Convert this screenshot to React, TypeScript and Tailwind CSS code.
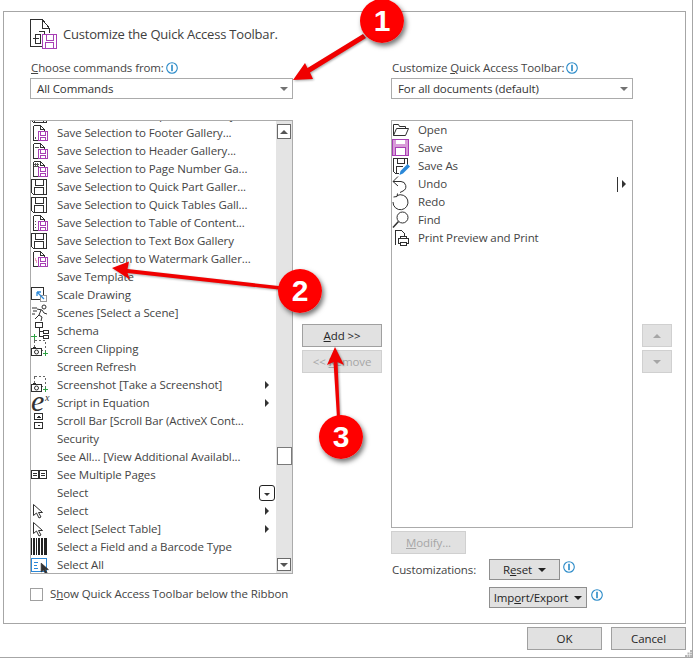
import React from "react";

const k = "#2f2f2f";
const p = "#a83fb5";

function Ic({ children, w = 18, h = 18 }: { children: React.ReactNode; w?: number; h?: number }) {
  return (
    <svg width={w} height={h} viewBox={`0 0 ${w} ${h}`} fill="none" shapeRendering="crispEdges" className="shrink-0 block">
      {children}
    </svg>
  );
}

function MiniSave({ x = 7, y = 7 }: { x?: number; y?: number }) {
  return (
    <g transform={`translate(${x} ${y})`}>
      <rect x="0.5" y="0.5" width="9" height="9" fill="#fff" stroke={p} />
      <path d="M2.5 1v3h5V1M2.5 9.5V6.5h5v3" stroke={p} />
    </g>
  );
}

function DocSave({ mark }: { mark?: React.ReactNode }) {
  return (
    <Ic>
      <path d="M2.5 1.5h7l4 4v2M2.5 1.5v15h5M9.5 1.5v4h4" stroke={k} />
      {mark}
      <MiniSave x={7} y={7} />
    </Ic>
  );
}

function BigSave() {
  return (
    <Ic>
      <path d="M0.5 1.5h15v15h-13l-2-2z" stroke={k} />
      <path d="M4.5 2v5.5h8V2M3.5 16v-6.5h9V16" stroke={k} />
    </Ic>
  );
}

function Cursor({ x = 0, y = 0, fill = "#fff", s = 1 }: { x?: number; y?: number; fill?: string; s?: number }) {
  return (
    <g transform={`translate(${x} ${y}) scale(${s})`}>
      <path d="M1.5 1.5v11l3-2.5 2.5 5 2-1-2.5-4.5h4z" fill={fill} stroke={k} shapeRendering="auto" />
    </g>
  );
}

function ShotIcon() {
  return (
    <Ic>
      <rect x="3.5" y="0.5" width="11" height="10" stroke="#666" strokeDasharray="2 2" />
      <rect x="0.5" y="8.5" width="10" height="7" fill="#fff" stroke={k} />
      <rect x="2" y="7" width="3" height="2" fill={k} />
      <circle cx="5.5" cy="12" r="2" stroke={k} shapeRendering="auto" />
      <path d="M12 13.5h5M14.5 11v5" stroke="#2ea043" />
    </Ic>
  );
}

function NoIcon() {
  return <span className="block w-[18px] h-[18px] shrink-0" />;
}

const SubArrow = () => <span className="ml-auto mr-[7px] w-0 h-0 border-y-[4px] border-y-transparent border-l-[4px] border-l-[#333]" />;

const DropBox = () => (
  <span className="ml-auto mr-[1px] flex items-end justify-center pb-[4px] w-[16px] h-[16px] rounded-[3px] border border-[#222] bg-white">
    <span className="w-0 h-0 border-x-[3px] border-x-transparent border-t-[3px] border-t-[#333]" />
  </span>
);

type Row = { t: string; i: React.ReactNode; r?: React.ReactNode };

const leftRows: Row[] = [
  { t: "Save Selection to Equation Gallery...", i: <BigSave /> },
  { t: "Save Selection to Footer Gallery...", i: <DocSave mark={<path d="M4 12.5h1v2H4z" fill="#555" />} /> },
  { t: "Save Selection to Header Gallery...", i: <DocSave mark={<path d="M4 5h4" stroke="#555" />} /> },
  { t: "Save Selection to Page Number Ga...", i: <DocSave mark={<path d="M4 3v4M6 3v4M3 4h5M3 6h5" stroke="#555" />} /> },
  { t: "Save Selection to Quick Part Galler...", i: <BigSave /> },
  { t: "Save Selection to Quick Tables Gall...", i: <BigSave /> },
  { t: "Save Selection to Table of Content...", i: <DocSave mark={<path d="M4 7h2M4 10h2M4 13h2" stroke="#555" strokeDasharray="1 1" />} /> },
  { t: "Save Selection to Text Box Gallery", i: <BigSave /> },
  { t: "Save Selection to Watermark Galler...", i: <DocSave mark={<path d="M4 8l2 5" stroke="#f0a0b8" />} /> },
  { t: "Save Template", i: <NoIcon /> },
  {
    t: "Scale Drawing",
    i: (
      <Ic>
        <rect x="0.5" y="1.5" width="12" height="12" stroke={k} />
        <rect x="9.5" y="9.5" width="6" height="6" fill="#fff" stroke="#999" />
        <path d="M6 6l7 7M6 6h4M6 6v4" stroke="#2b88d8" shapeRendering="auto" strokeWidth="1.3" />
      </Ic>
    ),
  },
  {
    t: "Scenes [Select a Scene]",
    i: (
      <Ic>
        <circle cx="13" cy="3" r="2" stroke={k} shapeRendering="auto" />
        <path d="M1 4h5M2 7h4M1 10h3M6 5l5 1 2 3 3 1M10 6l-2 5 3 2-1 4M8 11l-4 4" stroke={k} shapeRendering="auto" />
      </Ic>
    ),
  },
  {
    t: "Schema",
    i: (
      <Ic>
        <rect x="4.5" y="0.5" width="7" height="5" fill="#fff" stroke={k} />
        <path d="M8 6v9M8 9.5h4M8 14.5h4" stroke={k} />
        <rect x="12.5" y="8.5" width="5" height="3" fill="#fff" stroke={k} />
        <rect x="12.5" y="13.5" width="5" height="3" fill="#fff" stroke={k} />
        <path d="M0 14.5h6M3 11.5v6" stroke="#2ea043" />
      </Ic>
    ),
  },
  { t: "Screen Clipping", i: <ShotIcon /> },
  { t: "Screen Refresh", i: <NoIcon /> },
  { t: "Screenshot [Take a Screenshot]", i: <ShotIcon />, r: <SubArrow /> },
  {
    t: "Script in Equation",
    i: (
      <span className="relative block w-[18px] h-[18px] shrink-0 text-[#333] font-['Liberation_Serif',serif] italic leading-none tracking-normal">
        <span className="absolute left-0 top-[-8px] text-[30px] leading-[30px]">e</span>
        <span className="absolute left-[14px] top-[-1px] text-[10px] leading-[10px]">x</span>
      </span>
    ),
    r: <SubArrow />,
  },
  {
    t: "Scroll Bar [Scroll Bar (ActiveX Cont...",
    i: (
      <Ic>
        <rect x="3.5" y="1.5" width="8" height="6" stroke={k} />
        <path d="M5.5 5.5h4L7.5 3.5z" fill={k} />
        <rect x="3.5" y="10.5" width="8" height="6" stroke={k} />
        <path d="M5.5 12.5h4L7.5 14.5z" fill={k} />
      </Ic>
    ),
  },
  { t: "Security", i: <NoIcon /> },
  { t: "See All... [View Additional Availabl...", i: <NoIcon /> },
  {
    t: "See Multiple Pages",
    i: (
      <Ic>
        <rect x="0.5" y="4.5" width="7" height="8" stroke={k} />
        <rect x="8.5" y="4.5" width="7" height="8" stroke={k} />
        <path d="M2 7.5h4M2 9.5h4M10 7.5h4M10 9.5h4" stroke={k} />
      </Ic>
    ),
  },
  { t: "Select", i: <NoIcon />, r: <DropBox /> },
  { t: "Select", i: <Ic><Cursor x={1} y={1} /></Ic>, r: <SubArrow /> },
  { t: "Select [Select Table]", i: <Ic><Cursor x={1} y={1} /></Ic>, r: <SubArrow /> },
  {
    t: "Select a Field and a Barcode Type",
    i: (
      <Ic>
        <path d="M0.5 0v17M2.5 0v17M3.5 0v17M5.5 0v17M7.5 0v17M8.5 0v17M10 0v17M11.5 0v17M13 0v17M14.5 0v17M15.5 0v17" stroke="#222" />
      </Ic>
    ),
  },
  {
    t: "Select All",
    i: (
      <Ic>
        <rect x="0.5" y="2.5" width="15" height="13" stroke="#2b88d8" />
        <path d="M3 6h4M3 9h3M3 12h4" stroke="#2b88d8" />
        <Cursor x={9} y={6} fill="#333" s={0.8} />
      </Ic>
    ),
  },
];

const rightRows: Row[] = [
  {
    t: "Open",
    i: (
      <Ic>
        <path d="M1.5 14.5V3.5h5l1 2h6v2M1.5 14.5h12l3-7h-12z" stroke={k} shapeRendering="auto" />
      </Ic>
    ),
  },
  {
    t: "Save",
    i: (
      <Ic>
        <rect x="0.5" y="0.5" width="16" height="16" fill="#d89bd8" stroke={p} />
        <rect x="4" y="1" width="9" height="4" fill="#fff" />
        <rect x="3.5" y="8.5" width="10" height="8" fill="#fff" stroke={p} />
      </Ic>
    ),
  },
  {
    t: "Save As",
    i: (
      <Ic>
        <path d="M7 16.5H3.5l-2-2V1.5h14v6" stroke={k} />
        <path d="M5.5 2v4.5h7V2M4.5 16V9.5h6" stroke={k} />
        <path d="M7.5 18l1-4 7-7 2.5 2.5-7 7z" fill="#2b88d8" shapeRendering="auto" />
      </Ic>
    ),
  },
  {
    t: "Undo",
    i: (
      <Ic>
        <path d="M6 1.5L1 6.5L6 11M1 6.5H9a5 5 0 0 1 2 9.5L8 17.5" stroke={k} shapeRendering="auto" />
      </Ic>
    ),
    r: (
      <span className="ml-auto mr-[6px] flex items-center gap-[4px]">
        <span className="block w-px h-[15px] bg-[#333]" />
        <span className="w-0 h-0 border-y-[4px] border-y-transparent border-l-[4px] border-l-[#333]" />
      </span>
    ),
  },
  {
    t: "Redo",
    i: (
      <Ic>
        <path d="M5 2.6A7.5 7.5 0 1 1 1 9M5.5 0.5L5 3.5L1.5 4" stroke={k} shapeRendering="auto" />
      </Ic>
    ),
  },
  {
    t: "Find",
    i: (
      <Ic>
        <circle cx="10.5" cy="6.5" r="5.5" stroke={k} shapeRendering="auto" />
        <path d="M6.5 10.5L1 16.5" stroke={k} strokeWidth="1.5" shapeRendering="auto" />
      </Ic>
    ),
  },
  {
    t: "Print Preview and Print",
    i: (
      <Ic>
        <path d="M3.5 15.5v-14h6l3 3v4" stroke={k} />
        <rect x="6.5" y="9.5" width="10" height="5" fill="#fff" stroke={k} />
        <rect x="8.5" y="7.5" width="6" height="2" fill="#fff" stroke={k} />
        <rect x="8.5" y="13.5" width="6" height="3" fill="#fff" stroke={k} />
      </Ic>
    ),
  },
];

function Info() {
  return (
    <svg width="12" height="12" viewBox="0 0 12 12" className="block shrink-0">
      <circle cx="6" cy="6" r="5.3" fill="#fff" stroke="#2a8ac8" strokeWidth="1.1" />
      <rect x="5.2" y="2.8" width="1.6" height="6.4" fill="#2a8ac8" />
    </svg>
  );
}

function Rows({ rows, clipFirst }: { rows: Row[]; clipFirst?: boolean }) {
  return (
    <>
      {rows.map((r, i) => (
        <div key={i} className={`flex items-center h-[18px] shrink-0 whitespace-nowrap ${i === 0 && clipFirst ? "-mt-[15px]" : ""}`}>
          {r.i}
          <span className="ml-[8px]">{r.t}</span>
          {r.r}
        </div>
      ))}
    </>
  );
}

function Select({ text }: { text: string }) {
  return (
    <div className="w-full h-[21px] mt-[2px] border border-[#ababab] bg-white flex items-center justify-between pl-[6px] pr-[4px] text-[#333]">
      <span>{text}</span>
      <span className="block w-0 h-0 border-x-[4px] border-x-transparent border-t-[4px] border-t-[#727272]" />
    </div>
  );
}

function Badge({ n, cls }: { n: string; cls: string }) {
  return (
    <div
      className={`absolute ${cls} w-[44px] h-[44px] rounded-full flex items-center justify-center bg-[radial-gradient(circle_at_50%_40%,#ff0000_65%,#d40000_100%)] shadow-[2px_3px_5px_rgba(0,0,0,0.55)] text-white font-bold text-[30px] leading-none tracking-normal font-['Liberation_Sans',sans-serif]`}
    >
      {n}
    </div>
  );
}

const btn = "flex items-center justify-center bg-[#e1e1e1] border";
const on = "border-[#a0a0a0] text-[#262626]";
const off = "border-[#d0d0d0] text-[#a6a6a6]";

export default function App() {
  return (
    <div className="relative w-[697px] h-[659px] bg-white overflow-hidden text-[11.5px] leading-4 text-[#444] font-['Open_Sans',sans-serif] tracking-[-0.1px]">
      <div className="w-[693px] h-[658px] border-r border-b border-[#a6a6a6] pl-[3px] pt-[11px]">
        <div className="w-[683px] h-[613px] border border-[#a6a6a6] pl-[26px] pt-[7px]">
          <div className="flex items-center h-[30px] gap-[6px]">
            <svg width="27" height="30" viewBox="0 0 27 30" fill="none" className="block shrink-0" shapeRendering="crispEdges">
              <path d="M0.5 27.5V0.5h12l7 9v4M0.5 27.5h11M12.5 1v8.5h7" stroke={k} />
              <path d="M9 12.5h5v3M5.5 15.5h5v9h-5zM2.5 19.5h6" stroke={k} />
              <rect x="12.5" y="15.5" width="14" height="14" fill="#fff" stroke={p} />
              <path d="M16 16v5.5h7V16M15.5 29v-5.5h8V29" stroke={p} />
            </svg>
            <span className="text-[13px] text-[#404040] tracking-[-0.2px]">Customize the Quick Access Toolbar.</span>
          </div>
          <div className="flex mt-[11px]">
            <div className="w-[263px] flex flex-col">
              <div className="flex items-center h-[16px] gap-[2px] pl-[1px]">
                <span><u>C</u>hoose commands from:</span>
                <Info />
              </div>
              <Select text="All Commands" />
              <div className="flex mt-[21px] h-[454px] border border-[#ababab] bg-white">
                <div className="flex-1 min-w-0 flex flex-col overflow-hidden">
                  <Rows rows={leftRows} clipFirst />
                </div>
                <div className="w-[16px] bg-[#e4e4e4] flex flex-col items-center pt-[3px] pb-[2px]">
                  <div className="w-[14px] h-[15px] bg-white border border-[#6a6a6a] flex items-center justify-center">
                    <span className="w-0 h-0 border-x-[4px] border-x-transparent border-b-[4px] border-b-[#555]" />
                  </div>
                  <div className="mt-auto w-[15px] h-[18px] bg-white border border-[#7a7a7a] mb-[93px]" />
                  <div className="w-[14px] h-[13px] bg-white border border-[#6a6a6a] flex items-center justify-center">
                    <span className="w-0 h-0 border-x-[4px] border-x-transparent border-t-[4px] border-t-[#555]" />
                  </div>
                </div>
              </div>
              <div className="flex items-center mt-[12px] gap-[7px] whitespace-nowrap">
                <span className="block w-[13px] h-[13px] border border-[#a0a0a0] bg-white" />
                <span>S<u>h</u>ow Quick Access Toolbar below the Ribbon</span>
              </div>
            </div>

            <div className="w-[80px] ml-[9px] pt-[264px] flex flex-col gap-[3px]">
              <div className={`${btn} ${on} h-[23px]`}><span><u>A</u>dd &gt;&gt;</span></div>
              <div className={`${btn} ${off} h-[23px]`}><span>&lt;&lt; <u>R</u>emove</span></div>
            </div>

            <div className="w-[242px] ml-[9px] flex flex-col">
              <div className="flex items-center h-[16px] gap-[2px] pl-[1px]">
                <span>Customize <u>Q</u>uick Access Toolbar:</span>
                <Info />
              </div>
              <Select text="For all documents (default)" />
              <div className="flex flex-col mt-[21px] h-[408px] border border-[#ababab] bg-white overflow-hidden">
                <Rows rows={rightRows} />
              </div>
              <div className={`${btn} ${off} mt-[3px] w-[75px] h-[23px]`}><span><u>M</u>odify...</span></div>
              <div className="flex items-center mt-[5px] h-[21px]">
                <span className="w-[98px] pl-[1px]">Customizations:</span>
                <div className={`${btn} border-[#8f8f8f] text-[#262626] w-[71px] h-[21px] gap-[6px]`}>
                  <span>R<u>e</u>set</span>
                  <span className="w-0 h-0 border-x-[4px] border-x-transparent border-t-[4px] border-t-[#222]" />
                </div>
                <span className="ml-[3px] -mt-[6px] flex"><Info /></span>
              </div>
              <div className="flex items-center mt-[7px] h-[21px] pl-[98px]">
                <div className={`${btn} border-[#8f8f8f] text-[#262626] w-[98px] h-[21px] gap-[6px]`}>
                  <span>Imp<u>o</u>rt/Export</span>
                  <span className="w-0 h-0 border-x-[4px] border-x-transparent border-t-[4px] border-t-[#222]" />
                </div>
                <span className="ml-[4px] -mt-[6px] flex"><Info /></span>
              </div>
            </div>

            <div className="w-[30px] ml-[9px] pt-[264px] flex flex-col gap-[3px]">
              <div className={`${btn} border-[#d0d0d0] h-[23px]`}>
                <span className="w-0 h-0 border-x-[4px] border-x-transparent border-b-[4px] border-b-[#a6a6a6]" />
              </div>
              <div className={`${btn} border-[#d0d0d0] h-[23px]`}>
                <span className="w-0 h-0 border-x-[4px] border-x-transparent border-t-[4px] border-t-[#a6a6a6]" />
              </div>
            </div>
          </div>
        </div>
        <div className="flex justify-end gap-[9px] mt-[3px] pr-[6px]">
          <div className={`${btn} border-[#a0a0a0] text-[#262626] w-[75px] h-[23px]`}>OK</div>
          <div className={`${btn} border-[#a0a0a0] text-[#262626] w-[75px] h-[23px]`}>Cancel</div>
        </div>
      </div>

      <svg width="7" height="7" viewBox="0 0 7 7" className="absolute left-[685px] top-[650px]" fill="#b5b5b5">
        <rect x="5" y="0" width="2" height="2" />
        <rect x="2.5" y="2.5" width="2" height="2" />
        <rect x="5" y="2.5" width="2" height="2" />
        <rect x="0" y="5" width="2" height="2" />
        <rect x="2.5" y="5" width="2" height="2" />
        <rect x="5" y="5" width="2" height="2" />
      </svg>

      <svg width="697" height="659" viewBox="0 0 697 659" className="absolute left-0 top-0 pointer-events-none drop-shadow-[1px_1px_1px_rgba(0,0,0,0.35)]">
        <g fill="#f00000" stroke="none">
          <path d="M293 80L305 63L307.5 68L363 34L366 38L310 72.5L313 79z" />
          <path d="M112 268L129 261.5L127.5 269L283 286.5L283 290L127.5 273L130 279.5z" />
          <path d="M335 347L344 365L337.5 362L340 418L337 418L333.5 362L327 365z" />
        </g>
      </svg>

      <Badge n="1" cls="left-[360px] top-[-1px]" />
      <Badge n="2" cls="left-[278px] top-[269px]" />
      <Badge n="3" cls="left-[319px] top-[415px]" />
    </div>
  );
}
